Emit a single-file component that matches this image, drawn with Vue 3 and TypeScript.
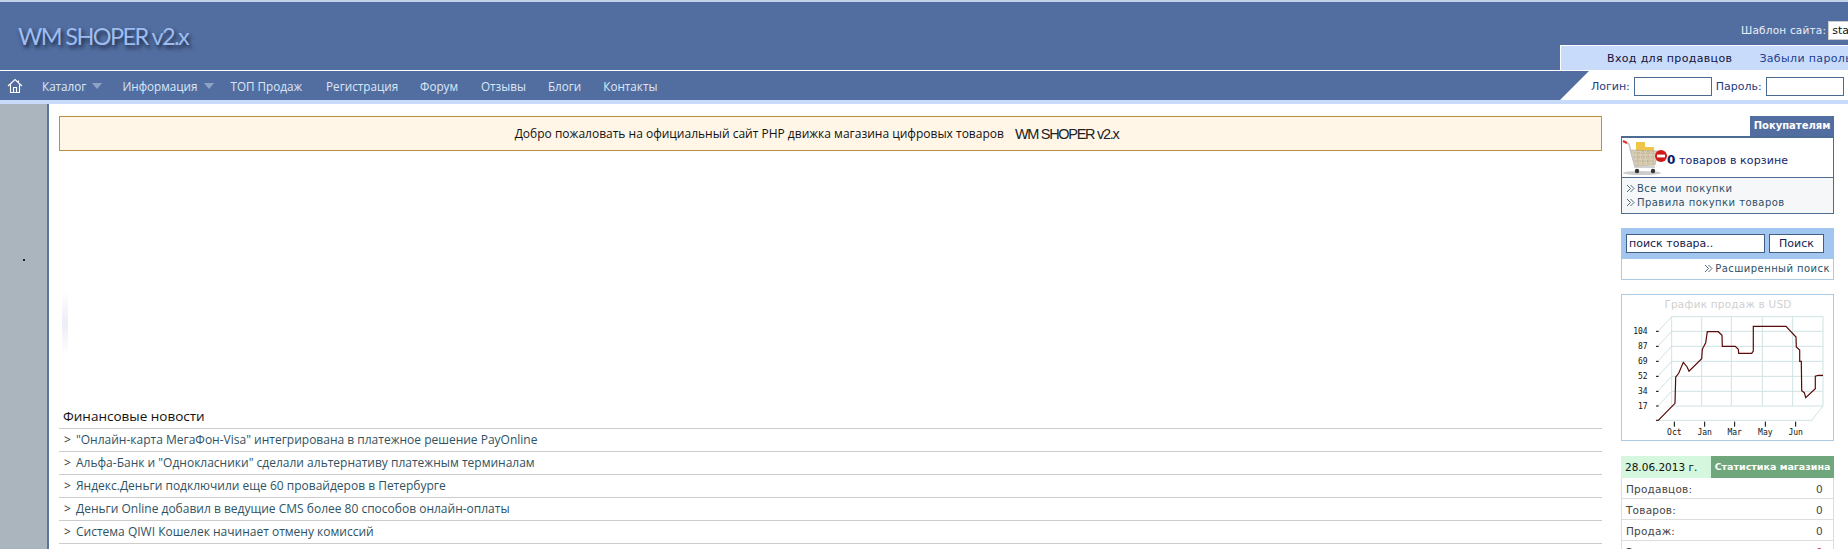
<script setup lang="ts">
const menu = [
  { t: 'Каталог', arrow: true },
  { t: 'Информация', arrow: true },
  { t: 'ТОП Продаж' },
  { t: 'Регистрация' },
  { t: 'Форум' },
  { t: 'Отзывы' },
  { t: 'Блоги' },
  { t: 'Контакты' },
]
const news = [
  '"Онлайн-карта МегаФон-Visa" интегрирована в платежное решение PayOnline',
  'Альфа-Банк и "Однокласники" сделали альтернативу платежным терминалам',
  'Яндекс.Деньги подключили еще 60 провайдеров в Петербурге',
  'Деньги Online добавил в ведущие CMS более 80 способов онлайн-оплаты',
  'Система QIWI Кошелек начинает отмену комиссий',
]
const stats = [
  ['Продавцов:', '0', ''],
  ['Товаров:', '0', ''],
  ['Продаж:', '0', ''],
  ['Заказов:', '0', 'red'],
]
const z = (x: number, y: number) => `${(x / 3 - 21).toFixed(1)},${(y / 3 - 9).toFixed(1)}`
const line = [[172,403],[222,352],[224,273],[233,262],[247,229],[258,242],[264,256],[302,218],[304,190],[314,170],[319,137],[352,137],[363,148],[364,181],[403,181],[412,190],[413,202],[452,202],[457,195],[457,121],[555,121],[585,153],[586,183],[596,192],[596,226],[601,226],[602,314],[610,320],[614,335],[643,308],[643,271],[652,268],[666,268]]
  .map(([x, y]) => z(x, y)).join(' ')
const hs = [92, 136, 181, 226, 271, 316, 360]
const vs = [212, 302, 391, 484, 575, 666]
const yl: [string, number][] = [['104', 136], ['87', 181], ['69', 226], ['52', 271], ['34', 316], ['17', 360]]
const xl: [string, number][] = [['Oct', 220], ['Jan', 311], ['Mar', 401], ['May', 493], ['Jun', 584]]
const pt = (a: number) => a / 3 - 21
const py = (a: number) => a / 3 - 9
</script>

<template>
  <div class="page">
    <header class="head">
      <div class="head-left">
        <div class="logo-row"><span class="logo">WM SHOPER v2.x</span></div>
        <nav class="nav">
          <svg class="home" width="16" height="16" viewBox="0 0 16 16" fill="none" stroke="#fff" stroke-width="1.1">
            <path d="M1 8 8 1.5 15 8M3.5 6.5V14.5H12.5V6.5M6.5 14.5V9.5H9.5V14.5M11.5 2.5V5" />
          </svg>
          <a v-for="m in menu" :key="m.t" class="nav-item">{{ m.t }}<i v-if="m.arrow" class="caret"></i></a>
        </nav>
      </div>
      <div class="head-right">
        <div class="tpl-row">
          <span class="tpl-label">Шаблон сайта:</span>
          <span class="tpl-select">standart</span>
        </div>
        <div class="login">
          <div class="login-top">
            <span class="l-black">Вход для продавцов</span>
            <span class="l-blue">Забыли пароль?</span>
          </div>
          <div class="login-bottom">
            <i class="corner"></i>
            <label class="l-label">Логин:</label><input class="l-input" />
            <label class="l-label">Пароль:</label><input class="l-input" />
          </div>
        </div>
      </div>
    </header>
    <div class="strip"></div>

    <div class="body">
      <aside class="gutter"><i class="dot"></i></aside>
      <main class="main">
        <div class="welcome">
          <span>Добро пожаловать на официальный сайт PHP движка магазина цифровых товаров</span>
          <span class="welcome-logo">WM SHOPER v2.x</span>
        </div>
        <div class="gap"><i class="ghost"></i></div>
        <h3 class="news-title">Финансовые новости</h3>
        <ul class="news">
          <li v-for="n in news" :key="n"><b>&gt;</b> {{ n }}</li>
        </ul>
      </main>

      <aside class="side">
        <div class="tab-row"><span class="tab">Покупателям</span></div>
        <section class="cart">
          <div class="cart-top">
            <svg class="cart-icon" width="45" height="36" viewBox="0 0 45 36">
              <ellipse cx="20" cy="33" rx="19" ry="2" fill="#ccc" />
              <path d="M14 2h9v5h9v5H14z" fill="#f0c64a" />
              <path d="M8 10 36 11 33 25 13 26z" fill="#d9cdb4" stroke="#b0a58f" stroke-width=".6" />
              <path d="M12 13h21M12 17h20M13 21h19M16 10v15M21 11v14M26 11v14M31 11v14" stroke="#a2967f" stroke-width=".8" stroke-dasharray="1 1.4" />
              <path d="M1 1 7 4l6 23h20" fill="none" stroke="#c4c4c4" stroke-width="1.4" />
              <path d="M1 1 5 3" stroke="#d33" stroke-width="2" />
              <circle cx="15" cy="31" r="2.2" fill="#333" /><circle cx="31" cy="31" r="2.2" fill="#333" />
              <circle cx="39" cy="16" r="6" fill="#d01818" />
              <rect x="35" y="14.6" width="8" height="2.8" fill="#fff" />
            </svg>
            <span class="cart-text"><b>0</b> товаров в корзине</span>
          </div>
          <div class="cart-links">
            <a><svg class="chev" width="9" height="9" viewBox="0 0 9 9"><path d="M1 1l3.5 3.5L1 8M4.5 1L8 4.5 4.5 8" fill="none" stroke="#3a5a70" stroke-width=".9" /></svg>Все мои покупки</a>
            <a><svg class="chev" width="9" height="9" viewBox="0 0 9 9"><path d="M1 1l3.5 3.5L1 8M4.5 1L8 4.5 4.5 8" fill="none" stroke="#3a5a70" stroke-width=".9" /></svg>Правила покупки товаров</a>
          </div>
        </section>

        <section class="search">
          <div class="search-bar">
            <span class="s-input">поиск товара..</span>
            <span class="s-btn">Поиск</span>
          </div>
          <div class="search-more"><svg class="chev" width="9" height="9" viewBox="0 0 9 9"><path d="M1 1l3.5 3.5L1 8M4.5 1L8 4.5 4.5 8" fill="none" stroke="#3a5a70" stroke-width=".9" /></svg>Расширенный поиск</div>
        </section>

        <section class="chart">
          <svg width="211" height="145" viewBox="0 0 211 145" class="chart-svg">
            <text x="106" y="13" class="c-title" text-anchor="middle">График продаж в USD</text>
            <g stroke="#cfe3e3" stroke-width="1" fill="none">
              <line v-for="h in hs" :key="'h' + h" :x1="pt(212)" :x2="pt(666)" :y1="py(h)" :y2="py(h)" />
              <line v-for="v in vs" :key="'v' + v" :x1="pt(v)" :x2="pt(v)" :y1="py(92)" :y2="py(360)" />
              <line v-for="h in hs" :key="'d' + h" :x1="pt(172)" :y1="py(h + 43)" :x2="pt(212)" :y2="py(h)" />
              <line :x1="pt(172)" :x2="pt(632)" :y1="py(403)" :y2="py(403)" />
              <line :x1="pt(666)" :y1="py(360)" :x2="pt(632)" :y2="py(403)" />
            </g>
            <g stroke="#000">
              <line v-for="l in yl" :key="'yt' + l[0]" :x1="pt(165)" :x2="pt(173)" :y1="py(l[1])" :y2="py(l[1])" />
              <line :x1="pt(165)" :x2="pt(173)" :y1="py(403)" :y2="py(403)" />
              <line v-for="l in xl" :key="'xt' + l[0]" :x1="pt(l[1])" :x2="pt(l[1])" :y1="py(407)" :y2="py(422)" />
            </g>
            <polyline :points="line" fill="none" stroke="#5a0a0a" stroke-width="1.2" />
            <text v-for="l in yl" :key="'yl' + l[0]" :x="pt(140)" :y="py(l[1]) + 3" class="c-lab" text-anchor="end">{{ l[0] }}</text>
            <text v-for="l in xl" :key="'xl' + l[0]" :x="pt(l[1])" :y="py(447)" class="c-lab" text-anchor="middle">{{ l[0] }}</text>
          </svg>
        </section>

        <section class="stats">
          <div class="stats-head">
            <span class="stats-date">28.06.2013 г.</span>
            <span class="stats-title">Статистика магазина</span>
          </div>
          <div v-for="s in stats" :key="s[0]" class="stats-row">
            <span>{{ s[0] }}</span><span :class="s[2]">{{ s[1] }}</span>
          </div>
        </section>
      </aside>
    </div>
  </div>
</template>

<style>
html, body { margin: 0; height: 100%; overflow: hidden; background: #fff; }
</style>

<style scoped>
.page { width: 1848px; height: 549px; overflow: hidden; font-family: "DejaVu Sans", sans-serif; font-size: 10.5px; }
.head { display: flex; height: 100px; background: #526ea0; border-top: 2px solid #c2d2ea; box-sizing: border-box; }
.head-left { flex: 1; min-width: 0; }
.logo-row { display: flex; align-items: center; padding-left: 18px; box-sizing: border-box; border-bottom: 1px solid #fff; height: 69px; }
.logo { font-family: Lato, sans-serif; font-size: 23.5px; letter-spacing: -1.6px; color: #9dbdf0; text-shadow: 2px 3px 4px #16213c; }
.nav { display: flex; align-items: center; height: 29px; padding-left: 7px; }
.home { margin-right: 19px; }
.nav-item { font-family: "Open Sans", sans-serif; font-size: 11.7px; color: #dbe7f8; margin-right: 22px; display: flex; align-items: center; white-space: nowrap; }
.nav-item:nth-of-type(1) { margin-right: 24px; }
.nav-item:nth-of-type(2) { margin-right: 21px; }
.nav-item:nth-of-type(3) { margin-right: 24px; }
.nav-item:nth-of-type(5) { margin-right: 23px; }
.caret { display: inline-block; margin-left: 6px; margin-right: -4px; border-left: 5px solid transparent; border-right: 5px solid transparent; border-top: 6px solid #8fa3c8; }
.head-right { width: 288px; flex: none; }
.tpl-row { height: 43px; display: flex; align-items: flex-start; padding-left: 181px; padding-top: 19px; box-sizing: border-box; white-space: nowrap; }
.tpl-label { color: #e8eefa; font-size: 10.5px; letter-spacing: .2px; line-height: 19px; }
.tpl-select { margin-left: 2px; background: #fff; border: 1px solid #ccc; width: 40px; height: 19px; line-height: 17px; padding-left: 3px; font-size: 11px; color: #111; overflow: hidden; flex: none; box-sizing: border-box; }
.login { height: 55px; }
.login-top { height: 25px; background: #c9dbfb; border-top: 1px solid #fff; border-left: 1px solid #fff; box-sizing: border-box; display: flex; align-items: center; white-space: nowrap; padding-left: 46px; font-size: 11px; letter-spacing: .35px; overflow: hidden; }
.l-black { color: #12123c; }
.l-blue { color: #1d3f8f; margin-left: 27px; }
.login-bottom { height: 30px; background: #fff; position: relative; display: flex; align-items: center; padding: 1px 0 0 31px; box-sizing: border-box; border-top: 1px solid #fff; }
.corner { position: absolute; left: 0; top: 0; width: 0; height: 0; border-top: 29px solid #526ea0; border-right: 29px solid transparent; }
.l-label { color: #1d3a80; font-size: 11px; margin-right: 4px; }
.l-input { width: 78px; height: 19px; box-sizing: border-box; border: 1px solid #4a6a90; margin-right: 4px; padding: 0; flex: none; }
.strip { height: 4px; background: #c9dbfb; }
.body { display: flex; height: 445px; overflow: hidden; }
.gutter { width: 47px; background: #abb5bd; border-right: 2px solid #5b7499; flex: none; position: relative; }
.dot { position: absolute; left: 23px; top: 155px; width: 2px; height: 2px; background: #222; }
.main { width: 1543px; margin-left: 10px; padding-top: 12px; flex: none; }
.welcome { height: 35px; box-sizing: border-box; background: #fff6e8; border: 1px solid #b8923a; padding-right: 28px; display: flex; align-items: center; justify-content: center; gap: 11px; font-family: "Open Sans", sans-serif; font-size: 12px; color: #111; }
.welcome-logo { font-family: "Liberation Sans", sans-serif; font-size: 14.5px; letter-spacing: -1.3px; color: #222; }
.gap { height: 250px; position: relative; }
.ghost { position: absolute; left: 3px; top: 140px; width: 6px; height: 65px; background: linear-gradient(to bottom, transparent, #eceef5 50%, transparent); }
.news-title { margin: 0; height: 28px; box-sizing: border-box; padding-left: 4px; padding-top: 6px; font-family: "Open Sans", sans-serif; font-weight: 400; font-size: 13.5px; line-height: 18px; color: #111; border-bottom: 1px solid #ccc; }
.news { list-style: none; margin: 0; padding: 0; font-family: "Open Sans", sans-serif; font-size: 12px; color: #2f5262; }
.news li { height: 23px; box-sizing: border-box; border-bottom: 1px solid #ccc; line-height: 22px; padding-left: 5px; white-space: nowrap; }
.news b { font-weight: 400; color: #333; margin-right: 2px; }
.side { width: 213px; margin-left: 19px; padding-top: 12px; flex: none; }
.tab-row { display: flex; justify-content: flex-end; }
.tab { width: 84px; height: 20px; background: #526ea0; color: #fff; font-weight: 700; font-size: 10px; text-align: center; line-height: 20px; }
.cart { border: 1px solid #4e6c92; border-top-width: 2px; height: 78px; box-sizing: border-box; margin-bottom: 14px; }
.cart-top { height: 40px; box-sizing: border-box; border-bottom: 1px solid #4e6c92; display: flex; align-items: center; overflow: hidden; }
.cart-icon { flex: none; }
.cart-text { color: #12266b; font-size: 11px; margin-top: 4px; white-space: nowrap; letter-spacing: .1px; }
.cart-text b { color: #0b1a66; font-size: 12px; }
.cart-links { height: 35px; background: #f5f7f9; padding: 4px 0 0 4px; box-sizing: border-box; color: #2d5068; font-size: 10px; letter-spacing: .45px; }
.cart-links a { display: block; line-height: 14px; white-space: nowrap; }
.chev { margin-right: 2px; vertical-align: -1px; }
.search { margin-bottom: 14px; }
.search-bar { height: 31px; background: #a3c6f0; display: flex; align-items: center; padding-left: 5px; gap: 4px; }
.s-input { width: 139px; height: 19px; box-sizing: border-box; border: 1px solid #3f5f85; background: #fff; color: #14224f; font-size: 11px; line-height: 17px; padding-left: 2px; }
.s-btn { width: 55px; height: 19px; box-sizing: border-box; border: 1px solid #3f5f85; background: #fff; color: #14224f; font-size: 11px; line-height: 17px; text-align: center; }
.search-more { height: 21px; box-sizing: border-box; border: 1px solid #a9cbe3; border-top: 0; text-align: right; padding-right: 3px; line-height: 20px; font-size: 10px; letter-spacing: .45px; color: #2d5068; }
.chart { height: 147px; box-sizing: border-box; border: 1px solid #a9cbe3; margin-bottom: 15px; }
.chart-svg { display: block; }
.c-title { font-size: 10.5px; fill: #d0d0d0; letter-spacing: .2px; font-family: "DejaVu Sans", sans-serif; }
.c-lab { font-family: "DejaVu Sans Mono", monospace; font-size: 8px; fill: #111; }
.stats-head { display: flex; height: 22px; font-size: 10.5px; line-height: 22px; }
.stats-date { width: 90px; background: #d5f7de; color: #111; padding-left: 4px; box-sizing: border-box; flex: none; white-space: nowrap; }
.stats-title { flex: 1; background: #6fa67c; color: #fff; font-weight: 700; font-size: 9.5px; text-align: center; white-space: nowrap; }
.stats-row { height: 21px; box-sizing: border-box; border: 1px solid #ddd; border-top: 0; display: flex; justify-content: space-between; padding: 0 10px 0 4px; line-height: 23px; color: #444; font-size: 10.5px; letter-spacing: .2px; }
.red { color: #d03030; }
</style>
